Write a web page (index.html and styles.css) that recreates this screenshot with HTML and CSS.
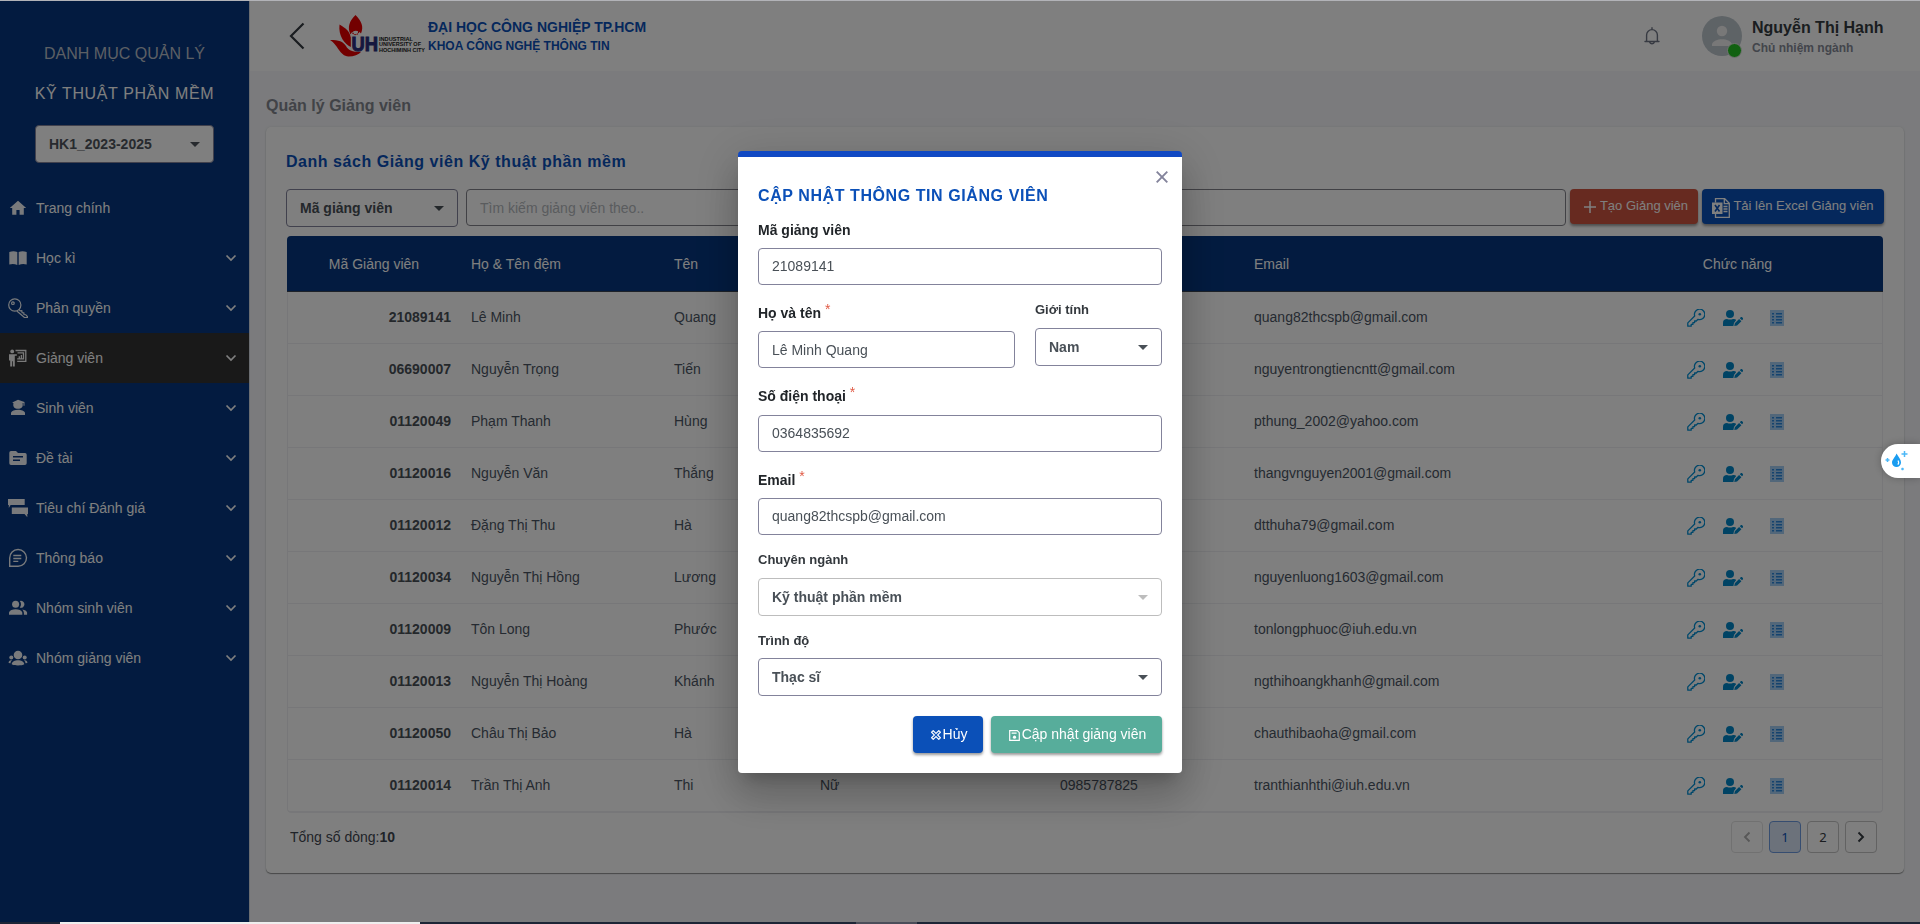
FILE: index.html
```html
<!DOCTYPE html>
<html lang="vi">
<head>
<meta charset="utf-8">
<title>Quản lý Giảng viên</title>
<link rel="stylesheet" href="styles.css">
</head>
<body>
<svg class="sprite" aria-hidden="true">
  <symbol id="chev" viewBox="0 0 12 8"><path d="M1.500 1.500 6 6l4.500-4.500" fill="none" stroke="currentColor" stroke-width="1.700"/></symbol>
  <symbol id="caret" viewBox="0 0 10 5"><path d="M0 0h10L5 5z" fill="currentColor"/></symbol>
  <symbol id="key" viewBox="0 0 18 18"><path d="M.8 17.200v-3.300l6.900-6.900a5.200 5.200 0 1 1 3.300 3.300l-1.700 1.700H7.600v1.700H5.900v1.700H4.200v1.800z" fill="none" stroke="currentColor" stroke-width="1.300" stroke-linejoin="round"/><circle cx="12.800" cy="5.200" r="1.300" fill="currentColor"/></symbol>
  <symbol id="user-edit" viewBox="0 0 20 16"><circle cx="7" cy="4" r="4" fill="currentColor"/><path d="M0 16v-3c0-3 1.500-4 4-4 2 .8 4 .8 6 0 1.500 0 2.500.3 3.200 1L11 13l-.6 3z" fill="currentColor"/><path d="m11.300 16 .5-2.800 4.300-4.300 2.300 2.300-4.300 4.300zM16.800 8.200l.9-.9c.5-.5 1-.5 1.500 0l.6.6c.5.5.4 1 0 1.500l-.8.9z" fill="currentColor"/></symbol>
  <symbol id="list" viewBox="0 0 14 16"><path d="M0 0h14v16H0z" fill="#a4cff5"/><path d="M2 3h2v1.500H2zm4 0h6v1.500H6zM2 6h2v1.500H2zm4 0h6v1.500H6zM2 9h2v1.500H2zm4 0h6v1.500H6zm-4 3h2v1.500H2zm4 0h6v1.500H6z" fill="#2a86dc"/></symbol>
</svg>

<div class="app">
  <aside class="sidebar">
    <div class="side-title muted">DANH MỤC QUẢN LÝ</div>
    <div class="side-title major">KỸ THUẬT PHẦN MỀM</div>
    <div class="select term"><span>HK1_2023-2025</span><svg class="caret"><use href="#caret"/></svg></div>
    <nav class="nav">
      <a class="item"><svg class="ico" viewBox="0 0 20 20"><path d="M10 2.700 1.800 10h2.400v6.800h4.200V12h3.200v4.800h4.200V10h2.400z" fill="currentColor"/></svg><span>Trang chính</span></a>
      <a class="item"><svg class="ico" viewBox="0 0 20 20"><path d="M1.300 4Q5.500 2.300 9.300 4v13Q5.500 15.300 1.300 16.500zM10.700 4Q14.500 2.300 18.700 4v12.500Q14.500 15.300 10.700 17z" fill="currentColor"/></svg><span>Học kì</span><svg class="chev"><use href="#chev"/></svg></a>
      <a class="item"><svg class="ico" viewBox="0 0 20 20"><g fill="none" stroke="currentColor" stroke-width="1.200"><circle cx="6.800" cy="7" r="6.100"/><path d="m11 11.500 1.200 1.300 1.600-.1.300 1.900 1.700.2.200 1.700 1.700.2 1.700 1.800v1.200h-2.700L8.800 13"/><circle cx="4.900" cy="5.200" r="1.300"/></g></svg><span>Phân quyền</span><svg class="chev"><use href="#chev"/></svg></a>
      <a class="item active"><svg class="ico" viewBox="0 0 20 20"><circle cx="4.200" cy="3.400" r="1.900" fill="currentColor"/><path d="M1 6.200h7.800v1.600H6.800v10.700H4.900v-5.300h-.8v5.300H2.200v-6H1z" fill="currentColor"/><path d="M7.500 2.500h10.300v10.800H9.200M9.500 4.900h6v6H9.200M11.300 11V8.200M13.400 11V7" fill="none" stroke="currentColor" stroke-width="1.300"/></svg><span>Giảng viên</span><svg class="chev"><use href="#chev"/></svg></a>
      <a class="item"><svg class="ico" viewBox="0 0 20 20"><path d="m10 1.700 6.500 2.200v3.900h-1V4.900l-1 .4c1 3.800-1.200 5.500-4.500 5.500S4.500 9 5.500 5.300L4.200 4.500zM3 17v-2.200c1.200-4 12.800-4 14 0V17z" fill="currentColor"/></svg><span>Sinh viên</span><svg class="chev"><use href="#chev"/></svg></a>
      <a class="item"><svg class="ico" viewBox="0 0 20 20"><path d="M3 3h5l2 2h7a1.700 1.700 0 0 1 1.700 1.700v8.600A1.700 1.700 0 0 1 17 17H3a1.700 1.700 0 0 1-1.700-1.700V4.700A1.700 1.700 0 0 1 3 3zm2 5v1.600h10V8zm0 3.500V13h7v-1.500z" fill="currentColor" fill-rule="evenodd"/></svg><span>Đề tài</span><svg class="chev"><use href="#chev"/></svg></a>
      <a class="item"><svg class="ico" viewBox="0 0 20 20"><path d="M0 1h16.700v6H2.600L.8 10V7H0zM3.800 9.500H20V16h-.7v3.300L16.500 16H3.800z" fill="currentColor"/></svg><span>Tiêu chí Đánh giá</span><svg class="chev"><use href="#chev"/></svg></a>
      <a class="item"><svg class="ico" viewBox="0 0 20 20"><path d="M1.700 18.200V10a8.400 8.400 0 1 1 8.400 8.300zM5.300 7.500h8M5.300 10.500h8M5.300 13.400h5" fill="none" stroke="currentColor" stroke-width="1.400"/></svg><span>Thông báo</span><svg class="chev"><use href="#chev"/></svg></a>
      <a class="item"><svg class="ico" viewBox="0 0 20 20"><circle cx="7.600" cy="6.300" r="3.500" fill="currentColor"/><path d="M1 16.700v-2.100c1.300-4.400 12-4.400 13.300 0v2.100zM11.800 3a3.500 3.500 0 1 1 0 6.600c1.600-2 1.600-4.600 0-6.600zM14.300 11.400c2.500.4 4.500 1.500 4.800 3.200v2.100h-3.200c.2-2.200-.2-4-1.600-5.300z" fill="currentColor"/></svg><span>Nhóm sinh viên</span><svg class="chev"><use href="#chev"/></svg></a>
      <a class="item"><svg class="ico" viewBox="0 0 20 20"><g fill="currentColor"><circle cx="10" cy="7" r="4.300"/><circle cx="3.300" cy="9.600" r="2"/><circle cx="16.700" cy="9.600" r="2"/><path d="M3.700 16.200c.5-5.400 12.100-5.400 12.600 0-2 1.600-10.600 1.600-12.600 0zM.6 15c0-2.500 1.400-3.100 3.400-2.800-1 .8-1.400 1.800-1.500 3zM19.400 15c0-2.500-1.400-3.100-3.400-2.800 1 .8 1.400 1.800 1.500 3z"/></g></svg><span>Nhóm giảng viên</span><svg class="chev"><use href="#chev"/></svg></a>
    </nav>
  </aside>

  <div class="main">
    <header class="topbar">
      <svg class="back" viewBox="0 0 16 28"><path d="M14.500 1.500 2 14l12.500 12.500" fill="none" stroke="currentColor" stroke-width="2.200"/></svg>
      <svg class="logo" viewBox="0 0 96 42">
        <path d="M25.500 0c6 6 8.500 11.500 5.500 18.500-3-4-8.500-3.500-10.500 1C17 12 19.500 6 25.500 0z" fill="#e60000"/>
        <path d="M9.500 9.500c7 4 10 7 11.300 13v9.500C15 29.500 8 21 9.500 9.500z" fill="#e60000"/>
        <path d="M0 25c9 0 13 1.500 16 6 2.500 4.500 6.500 6 12 5.500h3.500c-3 3.500-7.500 5-13 5C9.500 41 8 29.500 0 25z" fill="#e60000"/>
        <circle cx="25.500" cy="16.500" r="3.200" fill="none" stroke="#e60000" stroke-width="1.200" stroke-dasharray="1.500 .8"/>
        <path d="M21 20.500h11v16h-5q-6 0-6-5z" fill="#fff"/>
        <text x="21.500" y="35.700" class="logo-u" textLength="26.500" lengthAdjust="spacingAndGlyphs">UH</text>
        <text x="49" y="25.500" class="logo-t" textLength="34" lengthAdjust="spacingAndGlyphs">INDUSTRIAL</text>
        <text x="49" y="31" class="logo-t" textLength="42" lengthAdjust="spacingAndGlyphs">UNIVERSITY OF</text>
        <text x="49" y="37" class="logo-t" textLength="46" lengthAdjust="spacingAndGlyphs">HOCHIMINH CITY</text>
      </svg>
      <div class="school"><div class="school-name">ĐẠI HỌC CÔNG NGHIỆP TP.HCM</div><div class="faculty">KHOA CÔNG NGHỆ THÔNG TIN</div></div>
      <svg class="bell" viewBox="0 0 16 18"><path d="M1 14.500h14M2.600 14.300V8a5.400 5.400 0 0 1 10.800 0v6.300M5.800 15.500a2.300 1.800 0 0 0 4.400 0M8 2.500V.8" fill="none" stroke="currentColor" stroke-width="1.400" stroke-linecap="round"/></svg>
      <div class="avatar"><svg viewBox="0 0 40 40"><circle cx="20" cy="20" r="20" fill="#bdc6cd"/><circle cx="20" cy="15" r="5.200" fill="#f0f0f0"/><path d="M10 30v-2c2-6.500 18-6.500 20 0v2z" fill="#f0f0f0"/></svg><i class="online"></i></div>
      <div class="who"><div class="who-name">Nguyễn Thị Hạnh</div><div class="who-role">Chủ nhiệm ngành</div></div>
    </header>

    <h1 class="page-title">Quản lý Giảng viên</h1>
    <section class="card">
      <h2 class="card-title">Danh sách Giảng viên Kỹ thuật phần mềm</h2>
      <div class="filters">
        <div class="select by"><span>Mã giảng viên</span><svg class="caret"><use href="#caret"/></svg></div>
        <div class="search">Tìm kiếm giảng viên theo..</div>
        <button class="btn create"><svg viewBox="0 0 12 12"><path d="M6 0v12M0 6h12" stroke="currentColor" stroke-width="1.500"/></svg>Tạo Giảng viên</button>
        <button class="btn upload"><svg viewBox="0 0 18 20"><path d="M3.500 4.500V.7h9.200l4.600 4.500v14.100H3.500v-3.500M12.300.7v5h5M11.500 8.500h4M11.500 11h4M11.500 13.500h4" fill="none" stroke="currentColor" stroke-width="1.300"/><path d="M0 4.500h10.500v11.500H0z" fill="currentColor"/><path d="m3 7 4.500 6.500M7.500 7 3 13.500" stroke="#0b50b8" stroke-width="1.600"/></svg>Tải lên Excel Giảng viên</button>
      </div>
      <div class="table">
        <div class="row head"><div>Mã Giảng viên</div><div>Họ &amp; Tên đệm</div><div>Tên</div><div></div><div></div><div>Email</div><div>Chức năng</div></div>
        <div id="rows" class="rows"></div>
      </div>
      <footer class="foot">
        <div>Tổng số dòng:<b>10</b></div>
        <div class="pages">
          <span class="pg off"><svg viewBox="0 0 8 12"><path d="M6.500 1.500 2 6l4.500 4.500" fill="none" stroke="currentColor" stroke-width="1.900"/></svg></span>
          <span class="pg on">1</span><span class="pg">2</span>
          <span class="pg"><svg viewBox="0 0 8 12"><path d="M1.500 1.500 6 6l-4.500 4.500" fill="none" stroke="currentColor" stroke-width="1.900"/></svg></span>
        </div>
      </footer>
    </section>
  </div>
</div>

<div class="backdrop">
  <div class="modal">
    <svg class="close" viewBox="0 0 12 12"><path d="m.7.7 10.600 10.600M11.300.7.700 11.300" stroke="currentColor" stroke-width="1.900"/></svg>
    <h3 class="modal-title">CẬP NHẬT THÔNG TIN GIẢNG VIÊN</h3>
    <div class="field f-code"><label>Mã giảng viên</label><div class="input">21089141</div></div>
    <div class="pair">
      <div class="field f-name"><label>Họ và tên <sup>*</sup></label><div class="input low">Lê Minh Quang</div></div>
      <div class="field f-sex"><label class="small">Giới tính</label><div class="select"><span>Nam</span><svg class="caret"><use href="#caret"/></svg></div></div>
    </div>
    <div class="field f-phone"><label>Số điện thoại <sup>*</sup></label><div class="input">0364835692</div></div>
    <div class="field f-mail"><label>Email <sup>*</sup></label><div class="input">quang82thcspb@gmail.com</div></div>
    <div class="field f-major"><label class="small">Chuyên ngành</label><div class="select disabled"><span>Kỹ thuật phần mềm</span><svg class="caret"><use href="#caret"/></svg></div></div>
    <div class="field f-degree"><label class="small">Trình độ</label><div class="select"><span>Thạc sĩ</span><svg class="caret"><use href="#caret"/></svg></div></div>
    <div class="actions">
      <button class="btn cancel"><svg viewBox="0 0 10 10"><g fill="none" stroke="currentColor" stroke-width="1.100"><path d="M.6 2.200 2.200.6 5 3.400 7.800.6l1.600 1.600L6.600 5l2.800 2.800-1.600 1.600L5 6.600 2.200 9.400.6 7.800 3.400 5z"/></g></svg>Hủy</button>
      <button class="btn save"><svg viewBox="0 0 11 11"><path d="M.7.700h7.600l2 2v7.600H.7zM2.600 3.200h5" fill="none" stroke="currentColor" stroke-width="1.200"/><circle cx="5.500" cy="7.200" r="1.600" fill="currentColor"/></svg>Cập nhật giảng viên</button>
    </div>
  </div>
</div>

<div class="assist"><svg viewBox="0 0 24 20"><path d="M11.500 2.500c2.500 4 4.500 6 4.500 9a4.500 4.500 0 0 1-9 0c0-3 3-5 4.500-9z" fill="#1a9cf0"/><path d="M13 9.500q1.500 2.500-.2 4.200" stroke="#fff" stroke-width="1.200" fill="none"/><path d="M19.500 0v6M16.500 3h6M2.500 7v4M.5 9h4M17.500 16.700v2.600M16.200 18h2.600" stroke="#4db8f7" stroke-width="1.500"/></svg></div>
<div class="edge-top"></div>
<div class="edge-bottom"><i class="strip-light"></i><i class="strip-grey"></i></div>
<script src="rows.js"></script>
</body>
</html>
```
FILE: styles.css
```css
* { box-sizing: border-box; }
body { margin: 0; height: 924px; overflow: hidden; font: 14px/20px "Liberation Sans", Arial, sans-serif; color: #4b5563; background: #f6f7fa; }
h1, h2, h3 { margin: 0; font-size: 16px; line-height: 20px; }
svg { display: block; flex: none; }
button { font: inherit; border: 0; margin: 0; }
.sprite { position: absolute; width: 0; height: 0; }
.app { display: flex; height: 924px; padding-top: 1px; }

/* Sidebar */
.sidebar { width: 249px; flex: none; background: #063780; color: #fff; padding-top: 43px; }
.side-title { height: 40px; font-size: 16px; line-height: 20px; text-align: center; }
.side-title.muted { color: #b9bfc9; }
.side-title.major { letter-spacing: .6px; }
.select { display: flex; align-items: center; justify-content: space-between; height: 38px; padding: 0 13px; border: 1px solid #83839b; border-radius: 4px; font-weight: bold; color: #495057; background: #fff; }
.caret { width: 10px; height: 5px; }
.select.term { width: 179px; margin: 1px 0 0 35px; color: #4f555c; }
.nav { margin-top: 20px; }
.item { display: flex; align-items: center; height: 50px; padding: 0 12px 0 8px; color: #fff; }
.item.active { background: #333; }
.ico { width: 20px; height: 20px; margin-right: 8px; opacity: .95; }
.chev { width: 12px; height: 8px; margin-left: auto; }

/* Top bar */
.main { flex: 1; min-width: 0; border-left: 1px solid #d5dbe3; }
.topbar { display: flex; align-items: center; height: 70px; padding: 0 36px 0 39px; background: #fff; }
.back { width: 16px; height: 28px; color: #343a40; }
.logo { width: 96px; height: 42px; margin-left: 25px; overflow: visible; }
.logo-u { font: bold 20px "Liberation Sans", sans-serif; fill: #2b2f7e; stroke: #2b2f7e; stroke-width: 1; }
.logo-t { font: bold 6px "Liberation Sans", sans-serif; fill: #222; }
.school { margin-left: 2px; color: #0b50b8; font-weight: bold; }
.school-name { font-size: 14px; line-height: 18px; }
.faculty { font-size: 12px; line-height: 18px; padding-top: 1px; }
.bell { width: 16px; height: 18px; margin-left: auto; color: #6f7585; }
.avatar { position: relative; width: 40px; height: 40px; margin-left: 42px; }
.online { position: absolute; right: 0; bottom: -2px; width: 15px; height: 15px; border-radius: 50%; border: 1.500px solid #e4e4e4; background: #22c322; }
.who { width: 132px; margin-left: 10px; padding-top: 4px; font-weight: bold; white-space: nowrap; }
.who-name { font-size: 16px; line-height: 20px; color: #343a40; }
.who-role { font-size: 12px; line-height: 20px; color: #868a97; }

/* Content card */
.page-title { margin: 24px 0 0 16px; height: 32px; line-height: 22px; color: #83868f; }
.card { margin: 0 16px; height: 746px; padding: 25px 20px 0; background: #fff; border-radius: 5px; box-shadow: 0 1px 1px rgba(0,0,0,.4), 0 0 3px rgba(0,0,0,.08); }
.card-title { height: 37px; color: #0b50b8; letter-spacing: .53px; }
.filters { display: flex; align-items: flex-start; height: 47px; }
.select.by { width: 172px; }
.search { flex: 1; height: 37px; margin: 0 4px 0 8px; padding: 0 13px; border: 1px solid #83838b; border-radius: 4px; line-height: 36px; color: #b4b8bd; }
.btn { display: flex; align-items: center; justify-content: center; height: 35px; border-radius: 4px; color: #fff; white-space: nowrap; box-shadow: 0 2px 3px rgba(0,0,0,.4); padding: 0; }
.create { width: 128px; padding: 0 0 2px 4px; background: #cf5540; font-size: 13px; }
.create svg { width: 12px; height: 12px; margin: 3px 4px 0 0; }
.upload { width: 182px; margin-left: 4px; padding: 0 0 2px; background: #0b50b8; font-size: 13px; }
.upload svg { width: 18px; height: 20px; margin: 4px 3px 0 0; }
.table { height: 577px; margin: 0 1px; border-radius: 4px; overflow: hidden; }
.rows { height: 521px; border: 1px solid #eeeff2; border-top: 0; border-bottom-width: 2px; border-radius: 0 0 4px 4px; overflow: hidden; }
.row { display: grid; grid-template-columns: 173px 203px 146px 240px 194px 348px 1fr; height: 52px; align-items: center; padding-bottom: 2px; border-bottom: 1px solid #eeeff2; }
.row > div { padding: 0 10px; }
.row > div:first-child { text-align: right; font-weight: bold; color: #495057; }
.row.head { grid-template-columns: 174px 203px 146px 240px 194px 348px 1fr; height: 56px; padding-bottom: 0; border-color: #3a4452; background: #063780; color: #fff; }
.row.head > div:first-child { text-align: center; font-weight: normal; color: #fff; }
.row.head > div:last-child { text-align: center; }
.row .tools { display: flex; align-items: center; padding-left: 95px; padding-top: 2px; color: #008fd5; }
.t-key { width: 18px; height: 18px; }
.t-user { width: 20px; height: 16px; margin-left: 18px; color: #0087c8; }
.t-list { width: 14px; height: 16px; margin-left: 27px; }
.foot { display: flex; justify-content: space-between; align-items: center; height: 48px; padding: 0 7px 0 4px; }
.foot > div:first-child { color: #3f4650; }
.pages { display: flex; gap: 6px; }
.pg { display: flex; align-items: center; justify-content: center; width: 32px; height: 32px; border: 1px solid #c4c4c4; border-radius: 4px; font: 13px "Noto Sans", sans-serif; color: #343a40; }
.pg svg { width: 8px; height: 12px; }
.pg.on { background: #d9e4f7; border-color: #6d9be0; color: #0b50b8; }
.pg.off { border-color: #e3e3e3; color: #b0b0b0; }

/* Dialog */
.backdrop { position: fixed; inset: 0; display: flex; align-items: center; justify-content: center; background: rgba(0,0,0,.5); }
.modal { position: relative; width: 444px; height: 622px; padding: 22px 20px 0; border-top: 6px solid #1149c3; border-radius: 4px; background: #fff; box-shadow: 0 11px 15px -7px rgba(0,0,0,.2), 0 24px 38px 3px rgba(0,0,0,.14), 0 9px 46px 8px rgba(0,0,0,.12); }
.close { position: absolute; top: 14px; right: 14px; width: 12px; height: 12px; color: #83839b; }
.modal-title { height: 41px; line-height: 33px; color: #0b50b8; letter-spacing: .58px; }
.field label { display: block; height: 28px; line-height: 20px; font-weight: bold; color: #212529; white-space: pre; }
.field label.small { font-size: 13px; line-height: 20px; color: #33383d; }
sup { color: #e05a45; font-size: 14px; font-weight: normal; line-height: 0; vertical-align: 4px; }
.input { height: 37px; padding: 0 13px; border: 1px solid #83839b; border-radius: 4px; line-height: 35px; color: #495057; }
.input.low { line-height: 37px; }
.f-code { height: 83px; }
.pair { display: flex; gap: 20px; height: 84px; }
.f-name { width: 257px; }
.f-sex { flex: 1; margin-top: -4px; }
.f-sex label.small { height: 29px; line-height: 22px; }
.f-phone { height: 83px; }
.f-phone label { line-height: 19px; }
.f-mail { height: 80px; }
.f-major { height: 80px; }
.f-degree { height: 86px; }
.f-degree label.small { line-height: 22px; }
.disabled { border-color: #bdbdbd; }
.disabled .caret { color: #bdbdbd; }
.actions { display: flex; justify-content: flex-end; gap: 8px; }
.actions .btn { height: 37px; padding: 0 0 1px 2px; }
.actions svg { margin: 2px 2px 0 0; }
.cancel { width: 70px; background: #0b50b8; }
.cancel svg { width: 10px; height: 10px; }
.save { width: 171px; background: #57ad9b; }
.save svg { width: 11px; height: 11px; }

/* Assistant tab and window edges */
.assist { position: fixed; right: 0; top: 444px; width: 39px; height: 34px; padding: 7px 0 0 4px; border-radius: 17px 0 0 17px; background: #fff; box-shadow: 0 0 8px rgba(0,0,0,.25); }
.assist svg { width: 24px; height: 20px; }
.edge-top { position: fixed; inset: 0 0 auto; height: 1px; background: #b2b3b8; }
.edge-bottom { position: fixed; inset: auto 0 0; display: flex; height: 2px; background: #1d2536; }
.strip-light { width: 360px; margin-left: 60px; background: #eee; }
.strip-grey { width: 61px; margin-left: 436px; background: #4b4d59; }
```
FILE: rows.js
```js
const lecturers = [
  ["21089141", "Lê Minh", "Quang", "", "", "quang82thcspb@gmail.com"],
  ["06690007", "Nguyễn Trọng", "Tiến", "", "", "nguyentrongtiencntt@gmail.com"],
  ["01120049", "Phạm Thanh", "Hùng", "", "", "pthung_2002@yahoo.com"],
  ["01120016", "Nguyễn Văn", "Thắng", "", "", "thangvnguyen2001@gmail.com"],
  ["01120012", "Đặng Thị Thu", "Hà", "", "", "dtthuha79@gmail.com"],
  ["01120034", "Nguyễn Thị Hồng", "Lương", "", "", "nguyenluong1603@gmail.com"],
  ["01120009", "Tôn Long", "Phước", "", "", "tonlongphuoc@iuh.edu.vn"],
  ["01120013", "Nguyễn Thị Hoàng", "Khánh", "", "", "ngthihoangkhanh@gmail.com"],
  ["01120050", "Châu Thị Bảo", "Hà", "", "", "chauthibaoha@gmail.com"],
  ["01120014", "Trần Thị Anh", "Thi", "Nữ", "0985787825", "tranthianhthi@iuh.edu.vn"]
];
const tools = '<div class="tools"><svg class="t-key"><use href="#key"/></svg>' +
  '<svg class="t-user"><use href="#user-edit"/></svg><svg class="t-list"><use href="#list"/></svg></div>';
document.getElementById("rows").innerHTML = lecturers
  .map(cells => '<div class="row">' + cells.map(c => "<div>" + c + "</div>").join("") + tools + "</div>")
  .join("");
```
